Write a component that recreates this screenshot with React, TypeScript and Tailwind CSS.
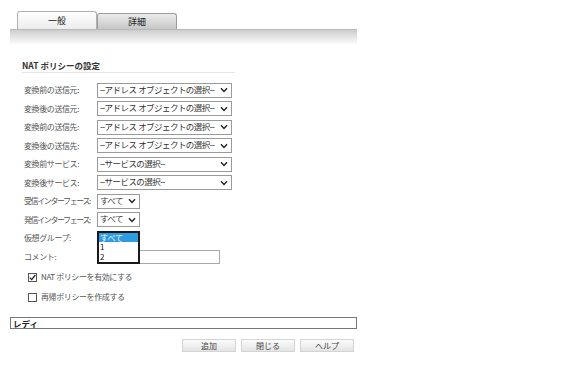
import React from "react";

const font = { fontFamily: '"Noto Sans CJK JP", "Noto Sans", sans-serif' };
const selFont = { fontFamily: '"Liberation Sans", "Noto Sans CJK JP", sans-serif' };

function Chevron() {
  return (
    <svg width="8" height="6" viewBox="0 0 8 6" className="shrink-0">
      <path d="M1 1.2 L4 4.4 L7 1.2" fill="none" stroke="#222" strokeWidth="1.4" />
    </svg>
  );
}

function FakeSelect({ text, wide }: { text: string; wide: boolean }) {
  return (
    <div
      className={`${wide ? "w-[135px]" : "w-[43px]"} h-[15px] border border-[#9a9a9a] bg-white flex items-center justify-between pl-[2px] pr-[3px] overflow-hidden`}
    >
      <span className="text-[8.5px] leading-[13px] text-[#333] tracking-[-0.55px] whitespace-nowrap" style={selFont}>
        {text}
      </span>
      <Chevron />
    </div>
  );
}

const rows: { label: string; text: string; wide: boolean; tight?: boolean }[] = [
  { label: "変換前の送信元:", text: "--アドレス オブジェクトの選択--", wide: true },
  { label: "変換後の送信元:", text: "--アドレス オブジェクトの選択--", wide: true },
  { label: "変換前の送信先:", text: "--アドレス オブジェクトの選択--", wide: true },
  { label: "変換後の送信先:", text: "--アドレス オブジェクトの選択--", wide: true },
  { label: "変換前サービス:", text: "--サービスの選択--", wide: true },
  { label: "変換後サービス:", text: "--サービスの選択--", wide: true },
  { label: "受信インターフェース:", text: "すべて", wide: false, tight: true },
  { label: "発信インターフェース:", text: "すべて", wide: false, tight: true },
];

export default function App() {
  return (
    <div className="w-[576px] h-[375px] bg-white overflow-hidden pt-[11px]" style={font}>
      {/* tabs */}
      <div className="ml-[17px] flex items-end h-[18px]">
        <div className="w-[80px] h-[18px] border border-b-0 border-[#b0b0b0] rounded-t-[3px] bg-gradient-to-b from-white to-[#ececec] flex items-center justify-center text-[9px] text-[#222]">
          一般
        </div>
        <div className="w-[80px] h-[16px] border border-b-0 border-[#9c9c9c] rounded-t-[3px] bg-gradient-to-b from-[#ececec] to-[#c6c6c6] flex items-center justify-center text-[9px] text-[#222]">
          詳細
        </div>
      </div>
      {/* band */}
      <div className="ml-[10px] w-[347px] h-[16px] border-t border-[#b8b8b8] bg-gradient-to-b from-[#cdcdcd] to-white" />

      {/* heading */}
      <div className="ml-[22px] mt-[15px] w-[213px] h-[13px] border-b border-[#e6e6e6] text-[8.5px] leading-[11px] font-bold text-[#333]">
        NAT ポリシーの設定
      </div>

      {/* rows */}
      <div className="mt-[8px] ml-[24px] flex flex-col">
        {rows.map((r, i) => (
          <div key={i} className="h-[18.5px] flex items-center">
            <div
              className={`w-[73px] text-[8px] text-[#555] whitespace-nowrap ${r.tight ? "tracking-[-1.4px]" : "tracking-[-0.4px]"}`}
            >
              {r.label}
            </div>
            <FakeSelect text={r.text} wide={r.wide} />
          </div>
        ))}
        <div className="h-[18.5px] flex items-center relative">
          <div className="w-[73px] text-[8px] text-[#555] whitespace-nowrap tracking-[-0.4px]">仮想グループ:</div>
          <div className="w-[43px] h-[15px]" />
          <div className="absolute left-[73px] top-[1.5px] w-[43px] h-[33px] border-2 border-[#1a1a1a] bg-white z-10 flex flex-col text-[8px] text-[#111]">
            <div className="h-[9.6px] leading-[9.6px] bg-[#2f9be0] text-white pl-[1px]">すべて</div>
            <div className="h-[9.6px] leading-[9.6px] pl-[1px]">1</div>
            <div className="h-[9.6px] leading-[9.6px] pl-[1px]">2</div>
          </div>
        </div>
        <div className="h-[18.5px] flex items-center">
          <div className="w-[73px] text-[8px] text-[#555] whitespace-nowrap tracking-[-0.4px]">コメント:</div>
          <div className="w-[123px] h-[14px] border border-[#a8a8a8] bg-white" />
        </div>
      </div>

      {/* checkboxes */}
      <div className="ml-[28px] mt-[1px] flex flex-col">
        <div className="h-[20px] flex items-center gap-[4px]">
          <div className="w-[9px] h-[9px] border border-[#555] bg-white flex items-center justify-center">
            <svg width="7" height="7" viewBox="0 0 7 7">
              <path d="M0.8 3.6 L2.7 5.6 L6.3 1" fill="none" stroke="#222" strokeWidth="1.3" />
            </svg>
          </div>
          <span className="text-[8px] text-[#555] tracking-[-0.4px]">NAT ポリシーを有効にする</span>
        </div>
        <div className="h-[20px] flex items-center gap-[4px]">
          <div className="w-[9px] h-[9px] border border-[#555] bg-white" />
          <span className="text-[8px] text-[#555] tracking-[-0.4px]">再帰ポリシーを作成する</span>
        </div>
      </div>

      {/* status */}
      <div className="ml-[10px] mt-[10px] w-[347px] h-[12px] border border-[#777] flex items-center pl-[2px] text-[8.5px] font-bold text-[#222]">
        レディ
      </div>

      {/* buttons */}
      <div className="ml-[182px] mt-[10px] flex gap-[5px]">
        {["追加", "閉じる", "ヘルプ"].map((b) => (
          <div
            key={b}
            className="w-[54px] h-[13px] border border-[#d4d4d4] bg-gradient-to-b from-[#fbfbfb] to-[#e4e4e4] flex items-center justify-center text-[8px] text-[#444]"
          >
            {b}
          </div>
        ))}
      </div>
    </div>
  );
}
